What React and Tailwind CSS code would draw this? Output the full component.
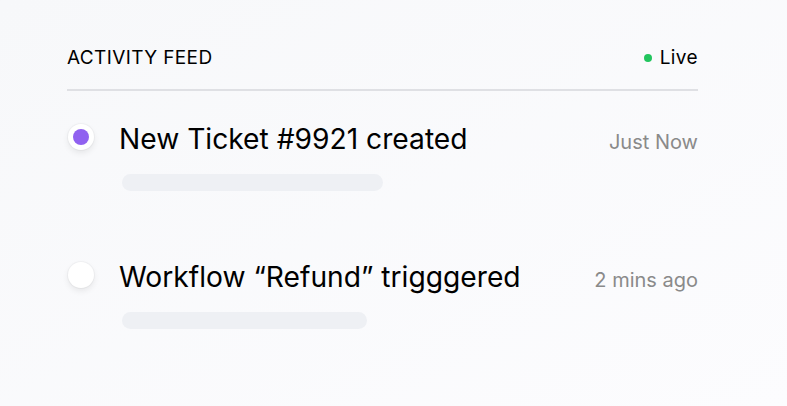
export default function App() {
  const items = [
    { title: 'New Ticket #9921 created', time: 'Just Now', active: true, bar: 'w-[261px]' },
    { title: 'Workflow \u201cRefund\u201d trigggered', time: '2 mins ago', active: false, bar: 'w-[245px]' },
  ];

  return (
    <div
      className="w-[787px] h-[406px] bg-gradient-to-br from-[#f7f8fa] to-[#fcfcfe] text-black overflow-hidden"
      style={{ fontFamily: 'Inter, "Noto Sans", sans-serif' }}
    >
      <div className="ml-[67px] w-[631px] pt-[46px]">
        {/* header */}
        <div className="flex items-center justify-between pb-[19px] border-b-2 border-[#dfe0e4]">
          <span className="text-[19px] leading-6 tracking-[0.02em]">ACTIVITY FEED</span>
          <span className="flex items-center gap-2 text-[19px] leading-6 tracking-[0.02em]">
            <span className="w-2 h-2 rounded-full bg-[#22c55e]" />
            Live
          </span>
        </div>

        {/* rows */}
        <div className="flex flex-col pt-[32px] gap-[70px]">
          {items.map((it) => (
            <div key={it.title} className="flex">
              <div className="w-[52px] shrink-0 pt-[1px]">
                <div className="ml-[1px] w-[26px] h-[26px] rounded-full bg-white shadow-[0_3px_6px_rgba(0,0,0,0.08),0_0_0_1px_rgba(0,0,0,0.03)] flex items-center justify-center">
                  {it.active && <div className="w-4 h-4 rounded-full bg-[#9061f0]" />}
                </div>
              </div>
              <div className="flex-1">
                <div className="flex items-baseline justify-between">
                  <span className="text-[28.2px] leading-8">{it.title}</span>
                  <span className="text-[20px] text-[#8a8a8a]">{it.time}</span>
                </div>
                <div className={`mt-[17px] ml-[3px] h-[17px] rounded-full bg-[#eef0f4] ${it.bar}`} />
              </div>
            </div>
          ))}
        </div>
      </div>
    </div>
  );
}
